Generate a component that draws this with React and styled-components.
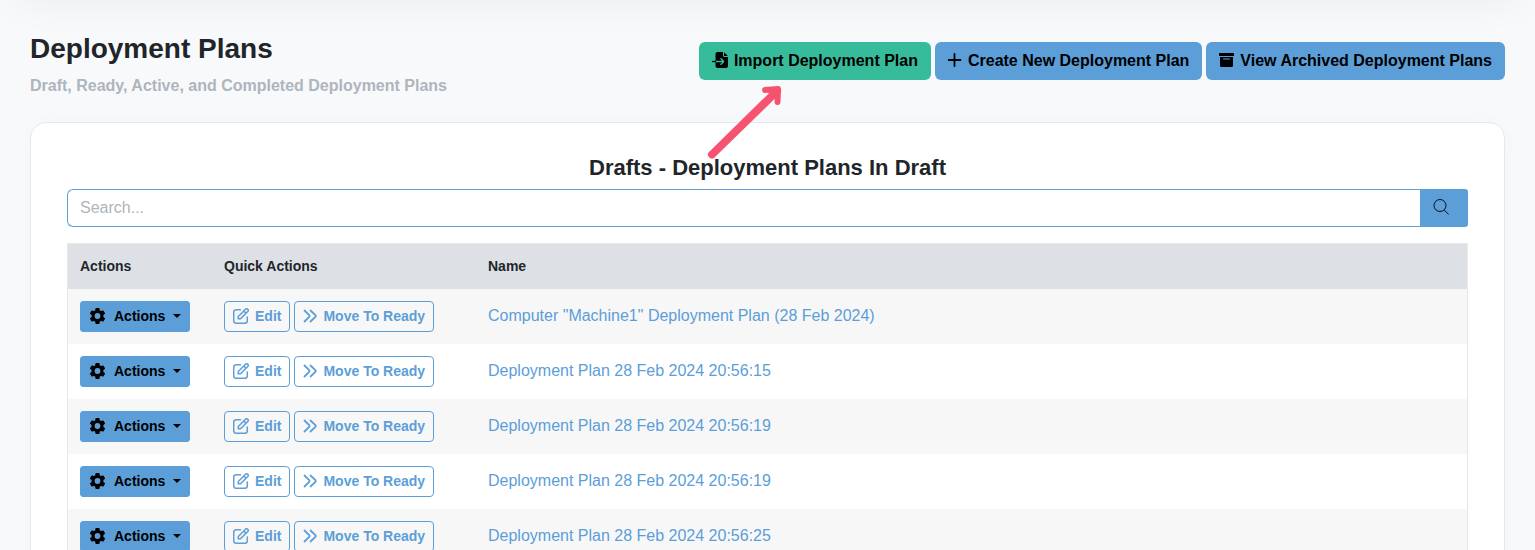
import React from "react";
import styled, { createGlobalStyle } from "styled-components";

const GlobalStyle = createGlobalStyle`
  *, *::before, *::after { box-sizing: border-box; }
  body {
    margin: 0;
    background: #f8f9fb;
    color: #212529;
    font: 16px/24px "Liberation Sans", Arial, sans-serif;
  }
`;

const BLUE = "#5c9ed8";
const GREEN = "#37bc9b";

const Page = styled.main`
  position: relative;
  overflow: hidden;
  padding: 30px;
`;

const NavShadow = styled.div`
  position: absolute;
  inset: -60px 15px auto;
  height: 60px;
  box-shadow: 0 0 40px rgba(0, 0, 0, 0.06);
`;

const PageHeader = styled.header`
  position: relative;
  z-index: 1;
  display: flex;
  justify-content: space-between;
  align-items: flex-start;
  flex-wrap: wrap;
  gap: 12px;
  margin-bottom: 24px;
`;

const Title = styled.h1`
  margin: 0 0 6px;
  font-size: 28px;
  line-height: 38px;
`;

const Subtitle = styled.p`
  margin: 0;
  font-weight: bold;
  color: #adb5bd;
`;

const Toolbar = styled.div`
  display: flex;
  flex-wrap: wrap;
  gap: 4px;
  padding-top: 12px;
`;

const Pointed = styled.div`
  position: relative;
`;

const PointerArrow = styled.svg`
  position: absolute;
  top: 40px;
  left: 4px;
  pointer-events: none;
`;

const Button = styled.button`
  display: inline-flex;
  align-items: center;
  gap: 6px;
  height: 38px;
  padding: 0 13px;
  border: 0;
  border-radius: 6px;
  background: ${(p) => p.$color || BLUE};
  color: #000;
  font: bold 16px/24px "Liberation Sans", Arial, sans-serif;
  white-space: nowrap;
  cursor: pointer;
`;

const SmallButton = styled(Button)`
  height: 31px;
  padding: 0 8px;
  gap: ${(p) => (p.$outline ? "6px" : "8px")};
  border: 1px solid ${BLUE};
  border-radius: ${(p) => (p.$outline ? "4px" : "3px")};
  background: ${(p) => (p.$outline ? "transparent" : BLUE)};
  color: ${(p) => (p.$outline ? BLUE : "#000")};
  font-size: 14px;
  line-height: 21px;
`;

const Caret = styled.span`
  margin-bottom: 2px;
  border: 4px solid transparent;
  border-top-color: currentColor;
  border-bottom: 0;
`;

const Card = styled.section`
  padding: 32px 36px;
  border: 1px solid #e5e9ed;
  border-radius: 16px;
  background: #fff;
  box-shadow: 0 0 20px rgba(0, 0, 0, 0.02);
`;

const CardTitle = styled.h2`
  margin: 0 0 8px;
  font-size: 22px;
  line-height: 26px;
  text-align: center;
`;

const SearchGroup = styled.form`
  display: flex;
  margin-bottom: 16px;
`;

const SearchInput = styled.input`
  flex: 1;
  min-width: 0;
  height: 38px;
  padding: 0 12px;
  border: 1px solid ${BLUE};
  border-right: 0;
  border-radius: 6px 0 0 6px;
  background: #fff;
  color: #212529;
  font: inherit;
  &::placeholder { color: #adb5bd; opacity: 1; }
`;

const SearchButton = styled(Button)`
  width: 48px;
  border-radius: 0 3px 3px 0;
`;

const Table = styled.table`
  width: 100%;
  table-layout: fixed;
  border-collapse: separate;
  border-spacing: 0;
  border: 1px solid #e5e7e9;
`;

const HeadCell = styled.th`
  width: ${(p) => p.$width || "auto"};
  height: 45px;
  padding: 0 12px;
  background: #dde1e6;
  font-size: 14px;
  line-height: 21px;
  text-align: left;
`;

const Row = styled.tr`
  &:nth-child(odd) { background: #f7f7f7; }
`;

const Cell = styled.td`
  height: 55px;
  padding: 0 12px;
`;

const NameCell = styled(Cell)`
  padding-bottom: 2px;
`;

const CellButtons = styled.div`
  display: flex;
  gap: 4px;
`;

const PlanLink = styled.a`
  color: ${BLUE};
  text-decoration: none;
`;

const Glyph = styled.svg`
  flex: none;
  display: block;
  margin-bottom: 2px;
`;

const ImportIcon = () => (
  <Glyph width="16" height="16" viewBox="0 0 16 16" aria-hidden="true">
    <path d="M5.500 0H11v3.500A1.500 1.500 0 0 0 12.500 5H16v9a2 2 0 0 1-2 2H5.500a2 2 0 0 1-2-2V2a2 2 0 0 1 2-2Z" />
    <path d="M12 .2 15.800 4H12Z" />
    <path d="M0 9.500h4" stroke="#000" strokeWidth="1.200" />
    <path d="M4 9.500h7.500M8.500 6.300l2.900 2.700q.5.500 0 1l-2.900 2.700" fill="none" stroke={GREEN} strokeWidth="1.300" />
  </Glyph>
);

const PlusIcon = () => (
  <Glyph width="14" height="16" viewBox="0 0 14 16" aria-hidden="true">
    <path d="M6.500 2v12M.7 8h11.800" stroke="#000" strokeWidth="1.800" strokeLinecap="round" />
  </Glyph>
);

const ArchiveIcon = () => (
  <Glyph width="15" height="16" viewBox="0 0 15 16" aria-hidden="true">
    <path d="M.6 1h13.800a.6.6 0 0 1 .6.6V4H0V1.600A.6.6 0 0 1 .6 1ZM1 5h13v8.500a1.500 1.500 0 0 1-1.500 1.500h-10A1.500 1.500 0 0 1 1 13.500ZM4.500 6.500a.5.5 0 0 0 0 1h6a.5.5 0 0 0 0-1Z" />
  </Glyph>
);

const SearchIcon = () => (
  <Glyph width="16" height="16" viewBox="0 0 16 16" fill="none" stroke="#000" aria-hidden="true">
    <circle cx="7" cy="6.500" r="6" strokeWidth=".9" />
    <path d="m11.300 11 4.300 4.500" strokeWidth=".9" />
  </Glyph>
);

const GearIcon = () => (
  <Glyph width="17" height="16" viewBox="0 0 16 16" aria-hidden="true">
    <path
      fillRule="evenodd"
      d="M6.700 0h2.600a.8.8 0 0 1 .8.7l.2 1.700 1.300.7 1.500-.6a.8.8 0 0 1 1 .3l1.300 2.300a.8.8 0 0 1-.2 1l-1.300 1v1.800l1.300 1a.8.8 0 0 1 .2 1l-1.300 2.300a.8.8 0 0 1-1 .3l-1.500-.6-1.300.7-.2 1.700a.8.8 0 0 1-.8.7H6.700a.8.8 0 0 1-.8-.7l-.2-1.700-1.300-.7-1.500.6a.8.8 0 0 1-1-.3L.6 10.900a.8.8 0 0 1 .2-1l1.300-1V7.100l-1.300-1a.8.8 0 0 1-.2-1l1.300-2.300a.8.8 0 0 1 1-.3l1.500.6 1.300-.7.2-1.700a.8.8 0 0 1 .8-.7ZM8 5.100a2.900 2.900 0 1 0 0 5.800 2.900 2.900 0 0 0 0-5.800Z"
    />
  </Glyph>
);

const EditIcon = () => (
  <Glyph width="16" height="16" viewBox="0 0 16 16" fill="none" stroke="currentColor" strokeWidth="1.500" aria-hidden="true">
    <path d="M7.500 1.700H3.300A2.600 2.600 0 0 0 .7 4.300v8.400a2.600 2.600 0 0 0 2.600 2.600h8.400a2.600 2.600 0 0 0 2.600-2.600V9" strokeLinecap="round" />
    <path d="M5.300 10.700V8.500L12.500 1.200a1.550 1.550 0 0 1 2.250 2.250L7.500 10.700ZM10.800 3l2.200 2.200" />
  </Glyph>
);

const ForwardIcon = () => (
  <Glyph width="14" height="16" viewBox="0 0 14 16" fill="none" stroke="currentColor" strokeWidth="1.800" strokeLinecap="round" aria-hidden="true">
    <path d="m1.500 2.500 4.700 4.700q.8.800 0 1.600l-4.700 4.700M7.500 2.500l4.900 4.700q.8.800 0 1.600l-4.900 4.700" />
  </Glyph>
);

const plans = [
  'Computer "Machine1" Deployment Plan (28 Feb 2024)',
  "Deployment Plan 28 Feb 2024 20:56:15",
  "Deployment Plan 28 Feb 2024 20:56:19",
  "Deployment Plan 28 Feb 2024 20:56:19",
  "Deployment Plan 28 Feb 2024 20:56:25",
];

const PlanRow = ({ name }) => (
  <Row>
    <Cell>
      <CellButtons>
        <SmallButton type="button" aria-haspopup="menu">
          <GearIcon />
          Actions
          <Caret />
        </SmallButton>
      </CellButtons>
    </Cell>
    <Cell>
      <CellButtons>
        <SmallButton type="button" $outline>
          <EditIcon />
          Edit
        </SmallButton>
        <SmallButton type="button" $outline>
          <ForwardIcon />
          Move To Ready
        </SmallButton>
      </CellButtons>
    </Cell>
    <NameCell>
      <PlanLink href="#plan">{name}</PlanLink>
    </NameCell>
  </Row>
);

export default function App() {
  return (
    <>
      <GlobalStyle />
      <Page>
        <NavShadow />
        <PageHeader>
          <div>
            <Title>Deployment Plans</Title>
            <Subtitle>Draft, Ready, Active, and Completed Deployment Plans</Subtitle>
          </div>
          <Toolbar>
            <Pointed>
              <Button type="button" $color={GREEN}>
                <ImportIcon />
                Import Deployment Plan
              </Button>
              <PointerArrow width="84" height="80" viewBox="0 0 84 80" fill="none" stroke="#f5536f" strokeLinecap="round" strokeLinejoin="round" aria-hidden="true">
                <path d="M9 72.500 74 9" strokeWidth="8" />
                <path d="M62 8 75 7 74.500 20" strokeWidth="6" />
                <path d="M66 9.500 75 7 73 16Z" fill="#f5536f" strokeWidth="3" />
              </PointerArrow>
            </Pointed>
            <Button type="button">
              <PlusIcon />
              Create New Deployment Plan
            </Button>
            <Button type="button">
              <ArchiveIcon />
              View Archived Deployment Plans
            </Button>
          </Toolbar>
        </PageHeader>
        <Card>
          <CardTitle>Drafts - Deployment Plans In Draft</CardTitle>
          <SearchGroup role="search">
            <SearchInput type="text" placeholder="Search..." aria-label="Search" />
            <SearchButton type="button" aria-label="Search">
              <SearchIcon />
            </SearchButton>
          </SearchGroup>
          <Table>
            <thead>
              <tr>
                <HeadCell $width="144px">Actions</HeadCell>
                <HeadCell $width="264px">Quick Actions</HeadCell>
                <HeadCell>Name</HeadCell>
              </tr>
            </thead>
            <tbody>
              {plans.map((name, i) => (
                <PlanRow key={i} name={name} />
              ))}
            </tbody>
          </Table>
        </Card>
      </Page>
    </>
  );
}
